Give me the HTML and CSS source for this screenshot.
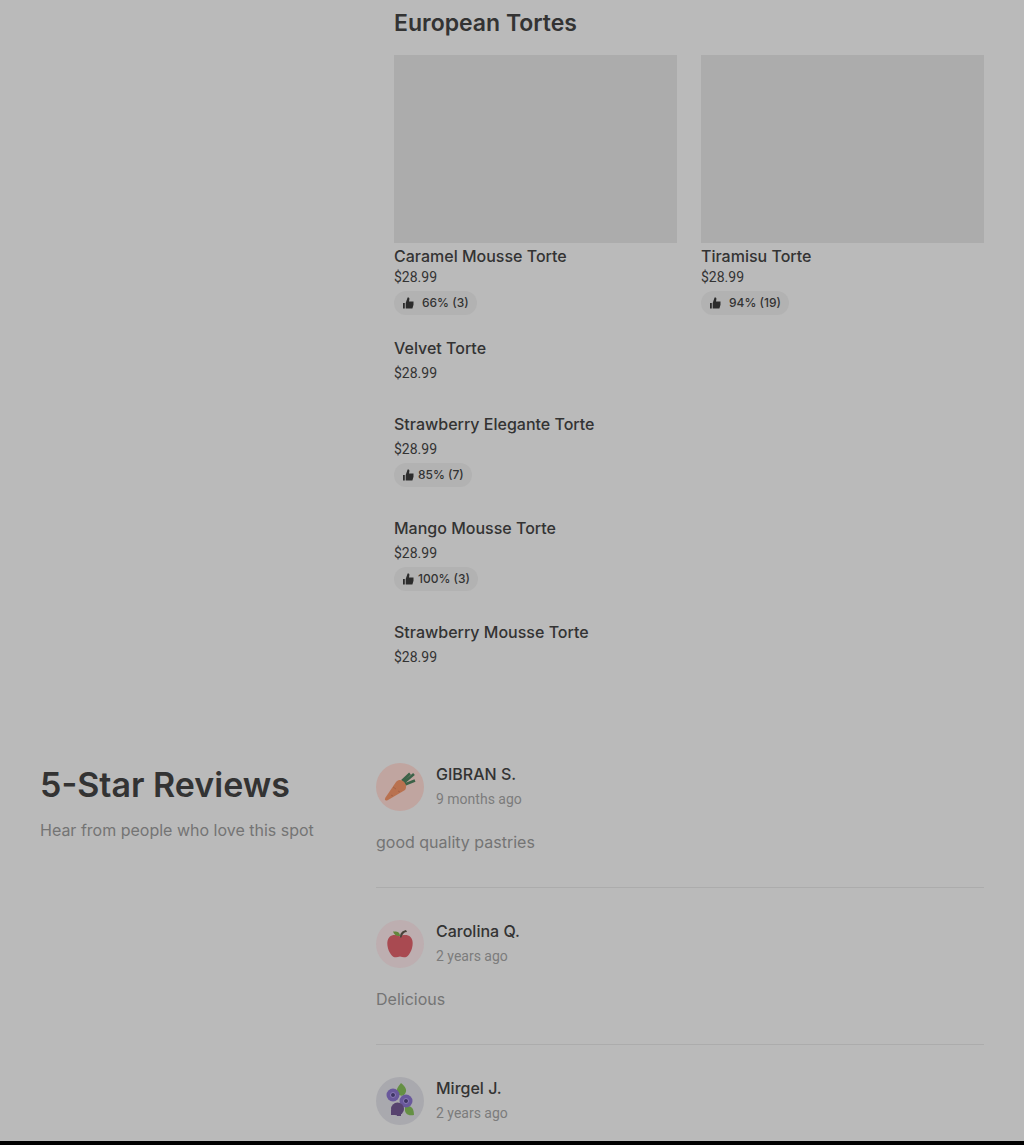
FILE: index.html
```html
<!DOCTYPE html>
<html lang="en">
<head>
  <meta charset="UTF-8">
  <title>European Tortes</title>
  <meta name="viewport" content="width=device-width, initial-scale=1.0">
  <link rel="stylesheet" href="styles.css">
</head>
<body>
  <!-- Shared icons -->
  <svg class="sprite" aria-hidden="true">
    <symbol id="thumb" viewBox="0 0 12 12">
      <path d="M1 6h1.800v5.500H1zM3.700 6 5.600 0.500h0.600c0.900 0 1.300 0.700 1.200 1.500L7 4.500H11.500v3.300l-1.100 3.700H3.700z"/>
    </symbol>
  </svg>

  <main class="page">

    <!-- Menu section -->
    <section class="menu">
      <h2 class="menu-title">European Tortes</h2>

      <div class="cards">
        <article class="card">
          <div class="card-image"></div>
          <h3 class="card-name">Caramel Mousse Torte</h3>
          <div class="price">$28.99</div>
          <div class="rating wide"><svg class="thumb"><use href="#thumb"/></svg>66% (3)</div>
        </article>
        <article class="card">
          <div class="card-image"></div>
          <h3 class="card-name">Tiramisu Torte</h3>
          <div class="price">$28.99</div>
          <div class="rating wide"><svg class="thumb"><use href="#thumb"/></svg>94% (19)</div>
        </article>
      </div>

      <ul class="items">
        <li class="item">
          <h3 class="item-name">Velvet Torte</h3>
          <div class="price">$28.99</div>
        </li>
        <li class="item">
          <h3 class="item-name">Strawberry Elegante Torte</h3>
          <div class="price">$28.99</div>
          <div class="rating"><svg class="thumb"><use href="#thumb"/></svg>85% (7)</div>
        </li>
        <li class="item">
          <h3 class="item-name">Mango Mousse Torte</h3>
          <div class="price">$28.99</div>
          <div class="rating"><svg class="thumb"><use href="#thumb"/></svg>100% (3)</div>
        </li>
        <li class="item">
          <h3 class="item-name">Strawberry Mousse Torte</h3>
          <div class="price">$28.99</div>
        </li>
      </ul>
    </section>

    <!-- Reviews -->
    <section class="reviews">
      <div class="reviews-intro">
        <h2 class="reviews-title">5-Star Reviews</h2>
        <p class="muted">Hear from people who love this spot</p>
      </div>

      <div class="review-list">
        <article class="review">
          <div class="author">
            <svg class="avatar" viewBox="0 0 48 48">
              <circle cx="24" cy="24" r="24" fill="#c0a5a0"/>
              <path d="M26 18 34 10.500M28 19.500 38 11M29 21.500 39 17.500" stroke="#3c6248" stroke-width="2.600" fill="none"/>
              <path d="M20 19c3-3 6-2 8 0s3 5 1 8L12 37c-2.500 1.200-4 0.200-2.500-2.500z" fill="#b9714f"/>
              <path d="m17 24 3 2M15 32l2 1M24 29l-2-1" stroke="#a66347" stroke-width="1"/>
            </svg>
            <div>
              <h3 class="author-name">GIBRAN S.</h3>
              <div class="time">9 months ago</div>
            </div>
          </div>
          <p class="muted">good quality pastries</p>
        </article>

        <article class="review">
          <div class="author">
            <svg class="avatar" viewBox="0 0 48 48">
              <circle cx="24" cy="24" r="24" fill="#bdaeb0"/>
              <path d="M24 16.500c3-2 8-2 10.500 0.500 4 4 2 13-1.500 17.500-2 3-5 3.500-9 2-4 1.500-7 1-9-2-3.500-4.500-5.500-13.500-1.500-17.500 2.500-2.500 7.500-2.500 10.500-0.500z" fill="#a94a51"/>
              <path d="M24 17c0-4 2-6 6-7l1 2c-3 0-4 2-5 4l-1 2z" fill="#49433a"/>
              <path d="M24 16c-4 0.500-6-1.500-7-4.500 4-0.500 7 0.500 7 4.500z" fill="#63863c"/>
            </svg>
            <div>
              <h3 class="author-name">Carolina Q.</h3>
              <div class="time">2 years ago</div>
            </div>
          </div>
          <p class="muted">Delicious</p>
        </article>

        <article class="review">
          <div class="author">
            <svg class="avatar" viewBox="0 0 48 48">
              <circle cx="24" cy="24" r="24" fill="#a9a9ae"/>
              <path d="M25 6c5 4 7 8 3 12-2 1-4 1-6-1-3-4 0-7 3-11zM29 30c5-2 9 0 9 8-6 1-10-1-9-8z" fill="#659044"/>
              <circle cx="17" cy="18" r="6.500" fill="#69589c"/>
              <circle cx="30" cy="24" r="6.500" fill="#69589c"/>
              <circle cx="21.500" cy="32" r="6.500" fill="#57436f"/>
              <path d="M15 33h4v5h-4zM21 34h4v5h-4z" fill="#57436f"/>
              <circle cx="17" cy="18" r="2.500" fill="#3e3564" stroke="#8b7bb8"/>
              <circle cx="30" cy="24" r="2.500" fill="#3e3564" stroke="#8b7bb8"/>
            </svg>
            <div>
              <h3 class="author-name">Mirgel J.</h3>
              <div class="time">2 years ago</div>
            </div>
          </div>
        </article>
      </div>
    </section>
  </main>

  <footer class="footer"></footer>
</body>
</html>
```
FILE: styles.css
```css
* {
  box-sizing: border-box;
}

body,
h2,
h3,
p,
ul {
  margin: 0;
  padding: 0;
}

body {
  background: #bababa;
  color: #333;
  font-family: Inter, "Liberation Sans", sans-serif;
  font-size: 16px;
  line-height: 24px;
}

.sprite {
  display: none;
}

.page {
  padding: 5px 40px 16px;
}

/* menu */
.menu {
  margin-left: 37.5%;
}

.menu-title {
  margin-bottom: 14px;
  font-size: 23px;
  font-weight: 600;
  line-height: 36px;
}

.cards {
  display: grid;
  grid-template-columns: 1fr 1fr;
  gap: 24px;
}

.card-image {
  height: 188px;
  margin-bottom: 3px;
  background: #acacac;
}

.card-name,
.item-name,
.author-name {
  font-size: 16px;
  font-weight: 500;
}

.card-name {
  margin-bottom: 1px;
  line-height: 20px;
}

.price,
.time {
  font-family: Roboto, "Liberation Sans", sans-serif;
  font-size: 14px;
  line-height: 20px;
}

.rating {
  display: flex;
  align-items: center;
  gap: 4px;
  width: fit-content;
  height: 24px;
  margin-top: 4px;
  padding: 0 8px;
  border-radius: 12px;
  background: #b2b2b2;
  font-size: 12px;
  font-weight: 500;
}

.rating.wide {
  gap: 8px;
}

.thumb {
  width: 12px;
  height: 12px;
  fill: #2c2c2c;
}

/* rows without a picture */
.items {
  margin-top: 21px;
  list-style: none;
}

.item {
  padding-bottom: 29px;
}

.item .price {
  margin-top: 3px;
}

/* reviews */
.reviews {
  display: grid;
  grid-template-columns: 1fr 2fr;
  gap: 32px;
  margin-top: 67px;
}

.reviews-title {
  margin-bottom: 11px;
  font-size: 34px;
  font-weight: 600;
  line-height: 44px;
}

.muted {
  color: #747474;
}

.review {
  padding-bottom: 33px;
}

.review + .review {
  padding-top: 32px;
  border-top: 1px solid #acacac;
}

.review:last-child {
  padding-bottom: 0;
}

.author {
  display: flex;
  gap: 12px;
}

.author + .muted {
  margin-top: 19px;
}

.author-name {
  line-height: 22px;
}

.avatar {
  width: 48px;
  height: 48px;
}

.time {
  margin-top: 4px;
  color: #7c7c7c;
}

.footer {
  height: 4px;
  background: #000;
}
```
